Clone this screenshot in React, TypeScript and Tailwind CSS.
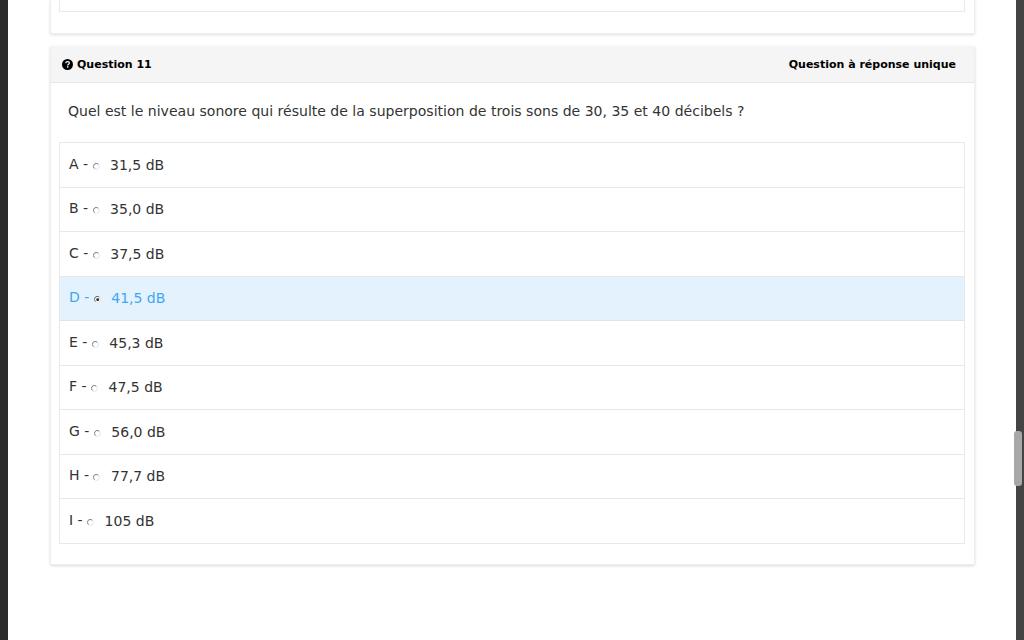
import React from "react";

type Choice = {
  letter: string;
  value: string;
  selected?: boolean;
};

const choices: Choice[] = [
  { letter: "A", value: "31,5 dB" },
  { letter: "B", value: "35,0 dB" },
  { letter: "C", value: "37,5 dB" },
  { letter: "D", value: "41,5 dB", selected: true },
  { letter: "E", value: "45,3 dB" },
  { letter: "F", value: "47,5 dB" },
  { letter: "G", value: "56,0 dB" },
  { letter: "H", value: "77,7 dB" },
  { letter: "I", value: "105 dB" },
];

const Radio = ({ checked }: { checked?: boolean }) => (
  <svg width="7" height="7" viewBox="0 0 7 7" className="mt-[3px] shrink-0">
    <circle cx="3.5" cy="3.5" r="2.9" fill="#fff" stroke="#dddddd" strokeWidth="0.8" />
    <path d="M5.2 1.1A2.9 2.9 0 0 0 1.4 5.5" fill="none" stroke={checked ? "#555" : "#777"} strokeWidth="0.9" />
    {checked && <circle cx="3.7" cy="3.7" r="1.4" fill="#222" />}
  </svg>
);

const QuestionIcon = () => (
  <svg width="11" height="11" viewBox="0 0 11 11">
    <circle cx="5.5" cy="5.5" r="5.5" fill="#000" />
    <path d="M3.7 4.2C3.8 3.2 4.6 2.7 5.6 2.7C6.6 2.7 7.4 3.3 7.4 4.1C7.4 5.2 5.7 5.2 5.7 6.4" fill="none" stroke="#fff" strokeWidth="1.2" />
    <rect x="5" y="7.2" width="1.4" height="1.4" fill="#fff" />
  </svg>
);

const App = () => {
  return (
    <div className="flex h-[640px] overflow-hidden bg-white font-['DejaVu_Sans',sans-serif] text-[#333]">
      <div className="w-2 bg-[#2b2b2b]" />
      <div className="flex-1 pl-[42px] pr-[41px]">
        <div className="h-[34px] border-b border-x border-[#eeeeee] pl-[8px] pr-[9px] shadow-[0_1px_3px_rgba(0,0,0,0.12)]">
          <div className="h-3 border-b border-x border-[#e8e8e8]" />
        </div>
        <div className="mt-3 h-[519px] rounded-[2px] border-x border-b border-[#eeeeee] shadow-[0_1px_3px_rgba(0,0,0,0.15)]">
          <div className="flex h-[37px] items-center justify-between border-b border-[#e7e7e7] bg-[#f5f5f5] pl-[11px] pr-[18px] text-[11px] font-bold text-black">
            <div className="flex items-center gap-1">
              <QuestionIcon />
              <span className="mt-[2px]">Question 11</span>
            </div>
            <span className="mt-[2px]">Question à réponse unique</span>
          </div>
          <p className="ml-[17px] pt-[19px] pb-[21px] text-[14.04px] leading-[19px]">
            Quel est le niveau sonore qui résulte de la superposition de trois sons de 30, 35 et 40 décibels ?
          </p>
          <ul className="ml-2 mr-[9px] border border-[#e8e8e8]">
            {choices.map((choice) => (
              <li
                key={choice.letter}
                className={
                  choice.selected
                    ? "flex h-[44.5px] items-center border-b border-[#dbe6ee] bg-[#e3f2fd] pl-[9px] text-sm text-[#42a5f5]"
                    : "flex h-[44.5px] items-center border-b border-[#e8e8e8] pl-[9px] text-sm last:h-[43.5px] last:border-b-0"
                }
              >
                <span className="-mt-[2px] whitespace-pre">{choice.letter} - </span>
                <Radio checked={choice.selected} />
                <span className="ml-[10.5px]">{choice.value}</span>
              </li>
            ))}
          </ul>
        </div>
      </div>
      <div className="w-2 bg-[#444444]" />
      <div className="absolute left-[1014px] top-[431px] h-[55px] w-2 rounded-[3px] bg-[#a8a8a8]" />
    </div>
  );
};

export default App;
